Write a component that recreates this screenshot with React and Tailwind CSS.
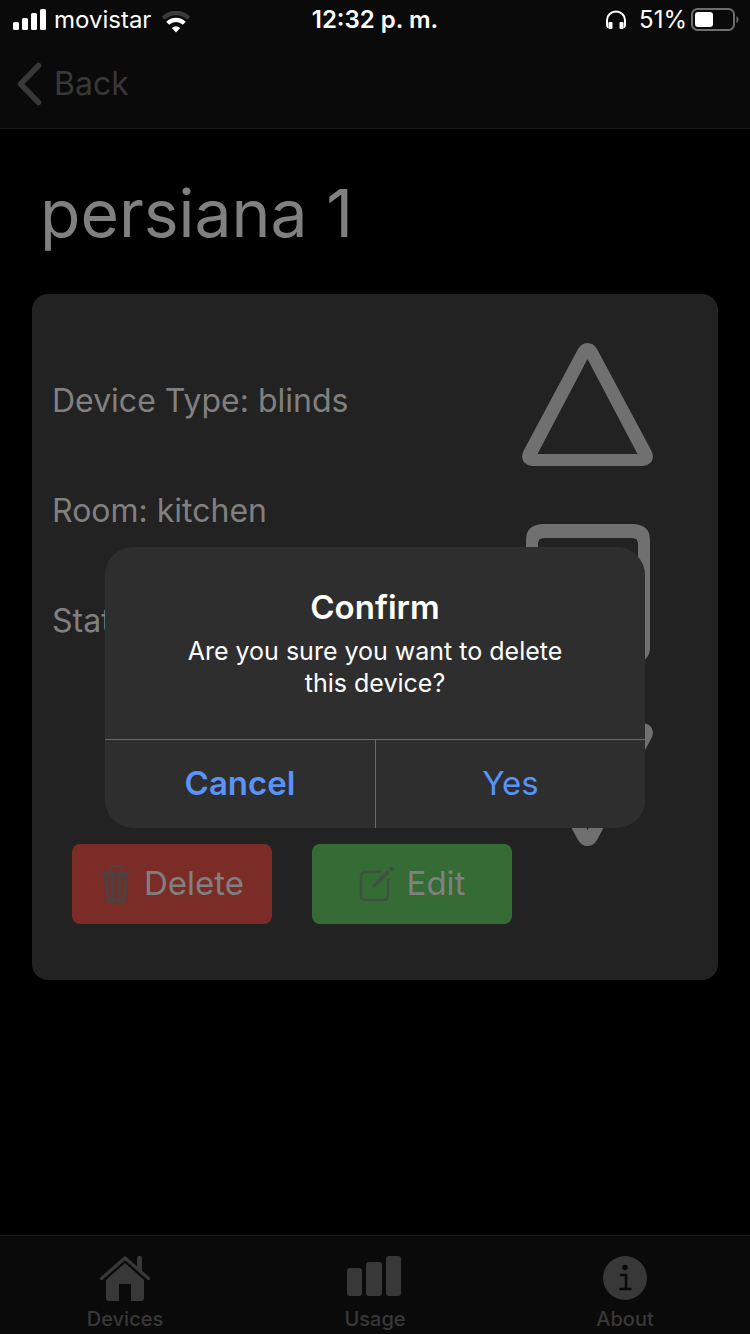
import React from "react";

function StatusBar() {
  return (
    <div className="relative flex h-10 items-center justify-between pr-3 pl-3 text-2xl text-white">
      <div className="flex items-center gap-2">
        <svg width="34" height="22" viewBox="0 0 34 22" fill="currentColor" aria-hidden="true">
          <rect x="1" y="13" width="6" height="8" rx="1.5" />
          <rect x="10" y="9" width="6" height="12" rx="1.5" />
          <rect x="19" y="4" width="6" height="17" rx="1.5" />
          <rect x="28" y="0" width="6" height="21" rx="1.5" />
        </svg>
        <span>movistar</span>
        <svg className="mt-1 ml-0.5" width="30" height="22" viewBox="0 0 30 22" aria-hidden="true">
          <path d="M2.3 7.2A18 18 0 0 1 27.7 7.2" fill="none" stroke="#3a3a3a" strokeWidth="4.4" />
          <path d="M6.700 12.200A12 12 0 0 1 23.300 12.200" fill="none" stroke="#fff" strokeWidth="4.2" />
          <path d="M10.800 17Q15 13.400 19.200 17L15 21.400Z" fill="#fff" />
        </svg>
      </div>
      <div className="absolute inset-x-0 text-center font-semibold">12:32 p. m.</div>
      <div className="flex items-center">
        <svg className="mr-3" width="22" height="20" viewBox="0 0 22 20" aria-hidden="true">
          <path d="M2 15V10A9 8.600 0 0 1 20 10V15" fill="none" stroke="#fff" strokeWidth="2" />
          <path d="M1 11H2.500L3.500 18H2.500Q1 17 1 15ZM21 11H19.500L18.500 18H19.500Q21 17 21 15Z" fill="#fff" />
          <rect x="3.500" y="12" width="4" height="7" rx="1" fill="#fff" />
          <rect x="14.500" y="12" width="4" height="7" rx="1" fill="#fff" />
        </svg>
        <span>51%</span>
        <svg className="-mr-px ml-1" width="48" height="24" viewBox="0 0 48 24" aria-hidden="true">
          <rect x="1" y="1" width="42" height="21" rx="5.5" fill="none" stroke="#6e6e6e" strokeWidth="2" />
          <rect x="4" y="4" width="18" height="15" rx="3" fill="#fff" />
          <path d="M45.500 8Q47.500 9 47.500 11.500T45.500 15Z" fill="#6e6e6e" />
        </svg>
      </div>
    </div>
  );
}

function TriangleIcon({ down }) {
  return (
    <svg className={down ? "block rotate-180" : "block"} width="131" height="123" viewBox="0 0 131 123" aria-hidden="true">
      <path
        fill="currentColor"
        fillRule="evenodd"
        d="M56 6Q59.500 0 65.500 0T75 6L129 107Q131 110 131 114Q130 122 121 123H10Q1 122 0 114Q0 110 2 107ZM65.500 16L15.500 111H115.500Z"
      />
    </svg>
  );
}

function StopIcon() {
  return (
    <svg className="block" width="131" height="141" viewBox="0 0 131 141" aria-hidden="true">
      <path
        fill="currentColor"
        fillRule="evenodd"
        d="M20 0H112Q128 1 128 16V123Q128 138 112 139H20Q4 138 4 123V16Q4 1 20 0ZM22 14Q16 14 16 20V119Q16 125 22 125H110Q116 125 116 119V20Q116 14 110 14Z"
      />
    </svg>
  );
}

function TrashIcon() {
  return (
    <svg width="32" height="38" viewBox="0 0 32 38" aria-hidden="true">
      <path d="M0 7.500H32M10 7V3.500Q10 1 12.500 1H19.500Q22 1 22 3.500V7" fill="none" stroke="currentColor" strokeWidth="2.200" />
      <path
        fill="currentColor"
        fillRule="evenodd"
        d="M3.500 7H28.500L26.500 35Q26.200 38 23.500 38H8.500Q5.800 38 5.500 35ZM8 11.500L9.300 33.500H11.300L10 11.500ZM15 11.500V33.500H17V11.500ZM22 11.500L20.700 33.500H22.700L24 11.500Z"
      />
    </svg>
  );
}

function EditIcon() {
  return (
    <svg width="36" height="36" viewBox="0 0 36 36" fill="none" stroke="currentColor" aria-hidden="true">
      <path d="M22 6H6Q2 6 2 10V30Q2 34 6 34H25Q29 34 29 30V13" strokeWidth="2.400" />
      <path d="M13 22L14.500 18L28.500 4.200L31 6.700L17 20.300Z" fill="currentColor" stroke="none" />
      <circle cx="32.500" cy="2.800" r="2" fill="currentColor" stroke="none" />
    </svg>
  );
}

function HomeIcon() {
  return (
    <svg width="50" height="46" viewBox="0 0 50 46" aria-hidden="true">
      <path d="M1.500 22.500L25 2L48.500 22.500" fill="none" stroke="currentColor" strokeWidth="3.200" strokeLinecap="round" strokeLinejoin="round" />
      <path d="M37 11V2Q37 0 39 0H40Q42 0 42 2V15.500Z" fill="currentColor" />
      <path d="M25 7L44 24V42Q44 45 41 45H31V28H19V45H9Q6 45 6 42V24Z" fill="currentColor" />
    </svg>
  );
}

function BarsIcon() {
  return (
    <svg width="56" height="46" viewBox="0 0 56 46" fill="currentColor" aria-hidden="true">
      <rect x="0" y="12" width="15" height="28" rx="3" />
      <rect x="19" y="6" width="16" height="34" rx="3" />
      <rect x="39" y="0" width="15" height="40" rx="3" />
    </svg>
  );
}

function InfoIcon() {
  return (
    <svg width="44" height="46" viewBox="0 0 44 46" aria-hidden="true">
      <circle cx="22" cy="22" r="22" fill="currentColor" />
      <circle cx="22" cy="11.500" r="2.800" fill="#0a0a0a" />
      <path d="M18 19H23V32.500M17.500 33H27.500" fill="none" stroke="#0a0a0a" strokeWidth="2.600" strokeLinecap="round" />
    </svg>
  );
}

const tabs = [
  { label: "Devices", Icon: HomeIcon },
  { label: "Usage", Icon: BarsIcon },
  { label: "About", Icon: InfoIcon },
];

const details = ["Device Type: blinds", "Room: kitchen", "State:"];

export default function App() {
  return (
    <div className="relative flex min-h-screen flex-col bg-black font-['Inter',sans-serif] text-[#808080]">
      <header className="border-b border-[#171717] bg-[#0a0a0a]">
        <StatusBar />
        <a href="#back" className="flex h-22 w-fit items-center gap-3 pl-[17px] text-[32px] text-[#383838]">
          <svg width="25" height="44" viewBox="0 0 25 44" fill="none" aria-hidden="true">
            <path d="M21.500 3.500L3.500 22L21.500 40.500" stroke="currentColor" strokeWidth="5.500" strokeLinecap="round" strokeLinejoin="round" />
          </svg>
          <span>Back</span>
        </a>
      </header>

      <main className="flex-1 px-8">
        <h1 className="pt-10 pb-9 pl-2 text-[66px] leading-[89px]">persiana 1</h1>
        <section className="flex rounded-2xl bg-[#222222] pt-12 pr-[65px] pb-14 pl-5">
          <div className="flex-1 pt-1">
            {details.map((text) => (
              <p key={text} className="flex h-[110px] items-center text-[32px]">
                {text}
              </p>
            ))}
            <div className="mt-[168px] flex gap-10 pl-5 text-[33px]">
              <button type="button" className="flex h-20 w-50 items-center justify-center gap-3 rounded-lg bg-[#7b2c26]">
                <span className="text-[#543f3c]"><TrashIcon /></span>
                Delete
              </button>
              <button type="button" className="flex h-20 w-50 items-center justify-center gap-3 rounded-lg bg-[#356b35]">
                <span className="text-[#3f4f41]"><EditIcon /></span>
                Edit
              </button>
            </div>
          </div>
          <div className="flex flex-col gap-[58px] pt-px text-[#707070]">
            <button type="button" aria-label="Open"><TriangleIcon /></button>
            <button type="button" aria-label="Stop"><StopIcon /></button>
            <button type="button" aria-label="Close"><TriangleIcon down /></button>
          </div>
        </section>
      </main>

      <nav className="flex border-t border-[#171717] bg-[#0a0a0a] pt-5 text-[20px] font-medium text-[#383838]">
        {tabs.map(({ label, Icon }) => (
          <a key={label} href={"#" + label.toLowerCase()} className="flex flex-1 flex-col items-center gap-1 pb-0.5">
            <Icon />
            <span className="leading-[26px]">{label}</span>
          </a>
        ))}
      </nav>

      <div className="absolute inset-0 flex items-center justify-center pt-10">
        <div role="alertdialog" aria-labelledby="confirm-title" aria-describedby="confirm-text" className="w-[540px] overflow-hidden rounded-[28px] bg-[#2e2e2e] text-center">
          <div className="px-16 pt-10 pb-10 text-white">
            <h2 id="confirm-title" className="text-[33px] leading-[40px] font-semibold">Confirm</h2>
            <p id="confirm-text" className="pt-2 text-[25px] leading-8">Are you sure you want to delete this device?</p>
          </div>
          <div className="grid grid-cols-2 border-t border-[#6a6a6a] text-[33px] text-[#5a92f8]">
            <button type="button" className="h-22 font-semibold">Cancel</button>
            <button type="button" className="h-22 border-l border-[#6a6a6a]">Yes</button>
          </div>
        </div>
      </div>
    </div>
  );
}
